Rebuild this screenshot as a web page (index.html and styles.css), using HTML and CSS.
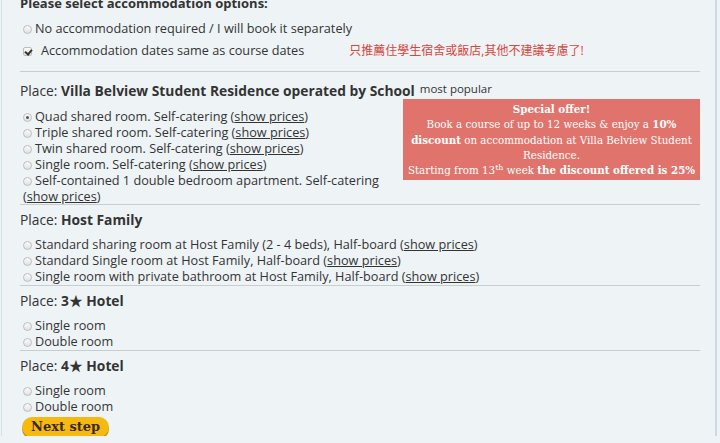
FILE: index.html
```html
<!DOCTYPE html>
<html lang="en">
  <head>
    <meta charset="UTF-8" />
    <meta name="viewport" content="width=device-width, initial-scale=1.0" />
    <title>Accommodation</title>
    <link rel="stylesheet" href="styles.css">
  </head>
  <body>
    <div class="frame">
      <div id="container">
        <h3 class="title">Please select accommodation options:</h3>

        <div class="intro">
          <label class="opt"><span class="radio"></span>No accommodation required / I will book it separately</label>
          <div class="sameDates">
            <label class="opt"><span class="check"></span>Accommodation dates same as course dates</label>
            <span class="note">只推薦住學生宿舍或飯店,其他不建議考慮了!</span>
          </div>
        </div>

        <div class="place villa">
          <h4>Place: <b>Villa Belview Student Residence operated by School</b><sup class="popular">most popular</sup></h4>
          <div class="offer">
            <b>Special offer!</b><br>
            Book a course of up to 12 weeks &amp; enjoy a <b>10% discount</b> on accommodation at Villa Belview Student Residence.<br>
            Starting from 13<sup>th</sup> week <b>the discount offered is 25%</b>
          </div>
          <label class="opt"><span class="radio on"></span>Quad shared room. Self-catering (<a>show prices</a>)</label>
          <label class="opt"><span class="radio"></span>Triple shared room. Self-catering (<a>show prices</a>)</label>
          <label class="opt"><span class="radio"></span>Twin shared room. Self-catering (<a>show prices</a>)</label>
          <label class="opt"><span class="radio"></span>Single room. Self-catering (<a>show prices</a>)</label>
          <label class="opt"><span class="radio"></span>Self-contained 1 double bedroom apartment. Self-catering (<a>show prices</a>)</label>
        </div>

        <div class="place">
          <h4>Place: <b>Host Family</b></h4>
          <label class="opt"><span class="radio"></span>Standard sharing room at Host Family (2 - 4 beds), Half-board (<a>show prices</a>)</label>
          <label class="opt"><span class="radio"></span>Standard Single room at Host Family, Half-board (<a>show prices</a>)</label>
          <label class="opt"><span class="radio"></span>Single room with private bathroom at Host Family, Half-board (<a>show prices</a>)</label>
        </div>

        <div class="place">
          <h4>Place: <b>3★ Hotel</b></h4>
          <label class="opt"><span class="radio"></span>Single room</label>
          <label class="opt"><span class="radio"></span>Double room</label>
        </div>

        <div class="place last">
          <h4>Place: <b>4★ Hotel</b></h4>
          <label class="opt"><span class="radio"></span>Single room</label>
          <label class="opt"><span class="radio"></span>Double room</label>
        </div>

        <button class="nextBtn">Next step</button>
      </div>
    </div>
  </body>
</html>
```

FILE: styles.css
```css
body {
  margin: 0;
  background: #eef3f6;
  font-family: "Open Sans", "Noto Sans CJK TC", sans-serif;
  font-size: 12.7px;
  color: #333;
  overflow: hidden;
}

.frame {
  height: 443px;
  margin: 0 3px 0 1px;
  border-left: 1px solid #d3e1ea;
  border-right: 2px solid #c9dbe7;
}

#container {
  width: 680px;
  margin-top: -7px;
  padding-left: 18px;
}

.title {
  margin: 0;
  font-size: 13px;
  font-weight: bold;
  line-height: 20px;
}

.intro {
  padding: 4px 0 10px;
}

.opt {
  display: block;
  line-height: 16px;
  margin-left: 3px;
}

.intro .opt {
  line-height: 22px;
}

.sameDates {
  display: flex;
  gap: 45px;
  align-items: center;
}

.note {
  color: #d9463d;
  font-size: 12px;
}

.radio,
.check {
  display: inline-block;
  width: 9px;
  height: 9px;
  margin-right: 3px;
  border: 1px solid #bdbdbd;
  border-radius: 50%;
  background: linear-gradient(#fafafa, #e2e2e2);
  vertical-align: -1px;
  box-sizing: border-box;
  position: relative;
}

.radio.on::after {
  content: "";
  position: absolute;
  left: 2px;
  top: 2px;
  width: 3px;
  height: 3px;
  border-radius: 50%;
  background: #555;
}

.check {
  border-radius: 2px;
  margin-right: 9px;
}

.check::after {
  content: "";
  position: absolute;
  left: 2px;
  top: 0px;
  width: 3px;
  height: 5px;
  border: solid #333;
  border-width: 0 2px 2px 0;
  transform: rotate(40deg);
}

a {
  color: #333;
  text-decoration: underline;
}

.place {
  border-top: 1px solid #c8cdd1;
  padding: 4px 0 1px;
}

.place.villa {
  padding: 5px 0 0;
}

.place.last {
  padding-bottom: 0;
}

.place h4 {
  margin: 0 0 5px;
  font-size: 13.8px;
  font-weight: normal;
  line-height: 22px;
}

.villa h4 {
  margin: 3px 0 6px;
}

.place h4 b {
  font-weight: bold;
}

.popular {
  font-size: 11.5px;
  margin-left: 5px;
  vertical-align: 3px;
  line-height: 0;
}

.offer {
  float: right;
  width: 297px;
  margin: -9px 0 0 10px;
  padding: 3px 1px 2px;
  box-sizing: border-box;
  background: #e0736b;
  color: #fff;
  font-family: "DejaVu Serif", serif;
  font-size: 10.3px;
  line-height: 15.3px;
  text-align: center;
}

.offer sup {
  font-size: 8px;
  line-height: 0;
}

.nextBtn {
  display: block;
  margin: 3px 0 0 2px;
  padding: 2px 9px 3px;
  border: none;
  border-radius: 12px;
  background: #f6b912;
  box-shadow: 0 2px 0 #c7930a;
  color: #3a2a10;
  font-family: "DejaVu Serif", serif;
  font-weight: bold;
  font-size: 13px;
}
```
